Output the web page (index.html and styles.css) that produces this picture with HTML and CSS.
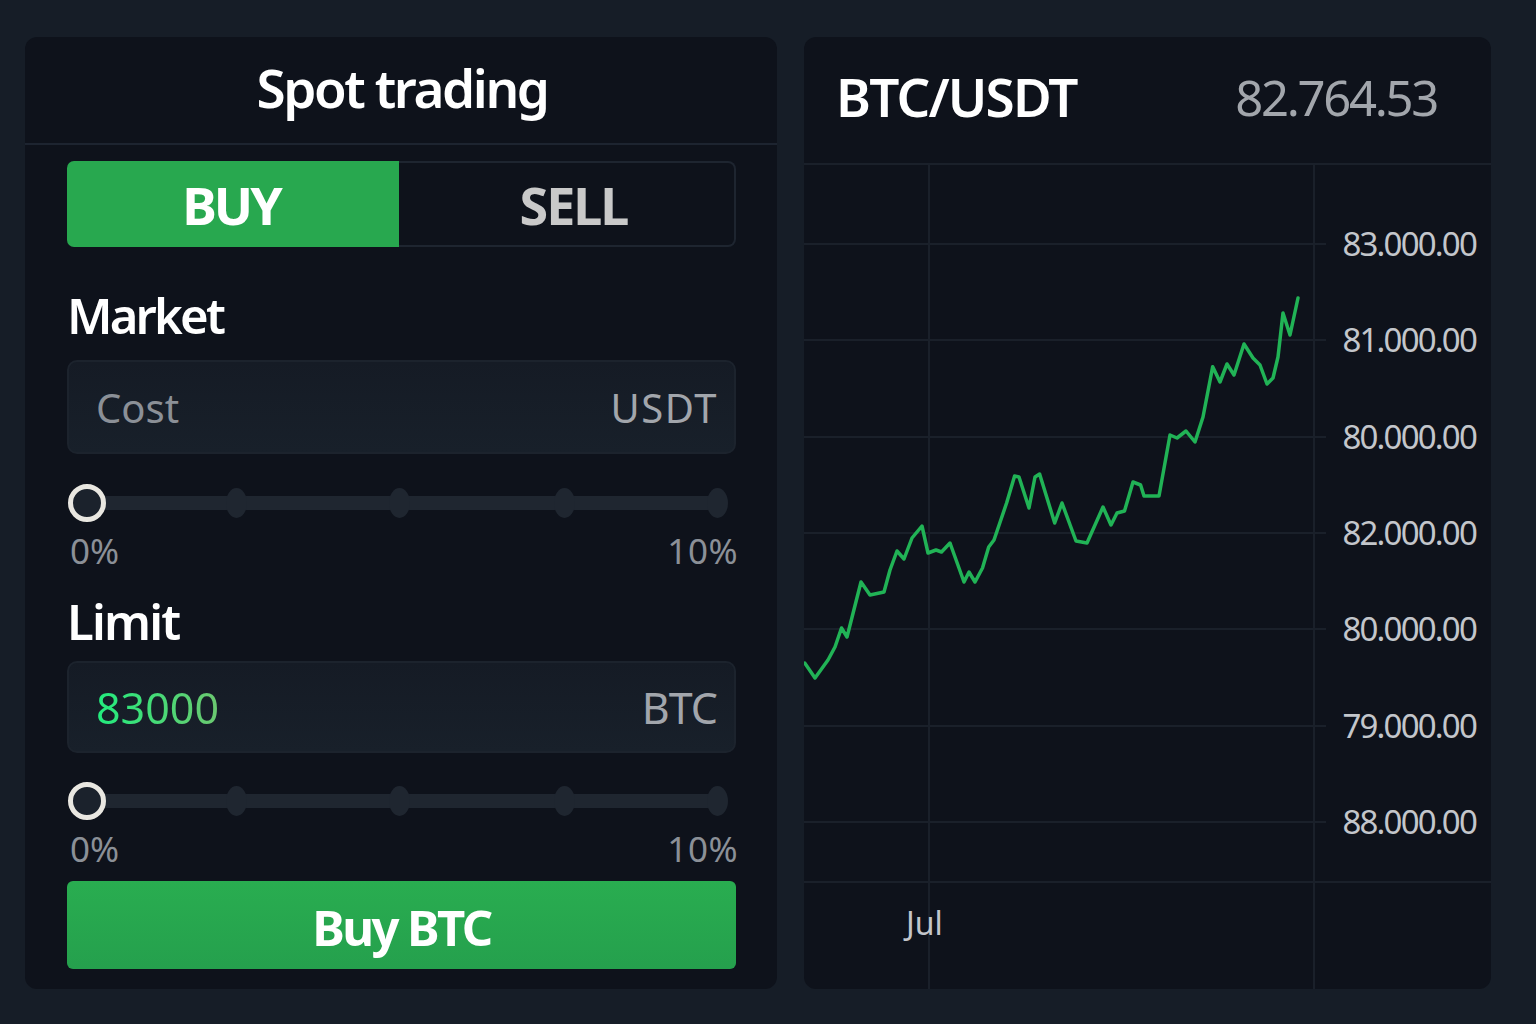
FILE: index.html
```html
<!DOCTYPE html>
<html lang="en">
<head>
<meta charset="utf-8">
<title>Spot trading</title>
<link rel="stylesheet" href="styles.css">
</head>
<body>
<div class="page">
  <section class="card trade">
    <header class="trade-head"><h1>Spot trading</h1></header>
    <div class="trade-body">
      <div class="toggle">
        <div class="tab tab-buy">BUY</div>
        <div class="tab tab-sell">SELL</div>
      </div>

      <h2 class="label label-market">Market</h2>
      <div class="field">
        <span class="field-ph">Cost</span>
        <span class="field-unit">USDT</span>
      </div>
      <div class="slider">
        <span class="knob"></span><span class="dot"></span><span class="dot"></span><span class="dot"></span><span class="dot"></span>
      </div>
      <div class="pct"><span>0%</span><span>10%</span></div>

      <h2 class="label label-limit">Limit</h2>
      <div class="field field-limit">
        <span class="field-val">83000</span>
        <span class="field-unit">BTC</span>
      </div>
      <div class="slider slider-2">
        <span class="knob"></span><span class="dot"></span><span class="dot"></span><span class="dot"></span><span class="dot"></span>
      </div>
      <div class="pct"><span>0%</span><span>10%</span></div>

      <button class="buy-btn">Buy BTC</button>
    </div>
  </section>

  <section class="card chart">
    <header class="chart-head">
      <span class="pair">BTC/USDT</span>
      <span class="price">82.764.53</span>
    </header>
    <svg class="chart-svg" viewBox="804 163 687 826" width="687" height="826">
      <g class="grid">
        <line x1="804" y1="164" x2="1491" y2="164"/>
        <line x1="804" y1="244" x2="1326" y2="244"/>
        <line x1="804" y1="340" x2="1326" y2="340"/>
        <line x1="804" y1="437" x2="1326" y2="437"/>
        <line x1="804" y1="533" x2="1326" y2="533"/>
        <line x1="804" y1="629" x2="1326" y2="629"/>
        <line x1="804" y1="726" x2="1326" y2="726"/>
        <line x1="804" y1="822" x2="1326" y2="822"/>
        <line x1="804" y1="882" x2="1491" y2="882"/>
        <line x1="929" y1="163" x2="929" y2="989"/>
        <line x1="1314" y1="163" x2="1314" y2="989"/>
      </g>
      <g class="axis">
        <text x="1476" y="256" text-anchor="end">83.000.00</text>
        <text x="1476" y="352" text-anchor="end">81.000.00</text>
        <text x="1476" y="449" text-anchor="end">80.000.00</text>
        <text x="1476" y="545" text-anchor="end">82.000.00</text>
        <text x="1476" y="641" text-anchor="end">80.000.00</text>
        <text x="1476" y="738" text-anchor="end">79.000.00</text>
        <text x="1476" y="834" text-anchor="end">88.000.00</text>
        <text x="906" y="935" class="month">Jul</text>
      </g>
      <polyline class="line" points="804.7,663 815,678 828,660 835,647 841.5,628 847,637 861,582 870,595 884,592 890,570 897,551 904,559 912,538 922,526 928,553 936,550 941.5,552 950,543 964,582 969,572 975,582 982.5,568 988.7,547 994,540 1006.6,503 1014.6,476 1019,477 1029,508 1035,477 1039.6,474 1054.7,523 1062,503 1076,541 1087,543 1103,507 1111,525 1117,513 1124.5,511 1133,482 1140.6,485 1144,496 1159,496 1170,435 1177,438 1186,431 1195,442 1203,417 1212.7,366.7 1220,382 1227,364 1234,375 1244,344 1253,358 1260,365 1267,384 1273,378 1278,357 1283,313 1290,335 1298,298"/>
    </svg>
  </section>
</div>
</body>
</html>
```

FILE: styles.css
```css
* { box-sizing: border-box; }
html, body { margin: 0; padding: 0; }
body {
  width: 1536px;
  height: 1024px;
  background: #161d27;
  font-family: "Noto Sans", "DejaVu Sans", sans-serif;
  overflow: hidden;
}
.page {
  display: flex;
  gap: 27px;
  padding: 37px 0 0 25px;
}
.card {
  background: #0e121b;
  border-radius: 12px;
  height: 952px;
  overflow: hidden;
}

/* ---------- trade card ---------- */
.trade { width: 752px; display: flex; flex-direction: column; }
.trade-head {
  height: 108px;
  border-bottom: 2px solid #1d2430;
  display: flex;
  align-items: center;
  justify-content: center;
}
.trade-head h1 {
  margin: 0;
  color: #ffffff;
  font-size: 53px;
  font-weight: 600;
  letter-spacing: -2.4px;
  line-height: 60px;
  margin-top: -5px;
  padding-left: 2px;
}
.trade-body {
  padding: 16px 41px 0 42px;
  display: flex;
  flex-direction: column;
}
.toggle {
  height: 86px;
  display: grid;
  grid-template-columns: 332px 1fr;
}
.tab {
  display: flex;
  align-items: center;
  justify-content: center;
  font-size: 52px;
  font-weight: 700;
  letter-spacing: -3px;
}
.tab-buy {
  background: #28a84f;
  color: #ffffff;
  border-radius: 7px 0 0 7px;
  padding-right: 4px;
}
.tab-sell {
  color: #c9c9c9;
  border: 2px solid #1e2530;
  border-left: none;
  border-radius: 0 8px 8px 0;
  padding-left: 14px;
  letter-spacing: -2px;
}

.label {
  margin: 38px 0 0 0;
  height: 60px;
  line-height: 60px;
  color: #ffffff;
  font-size: 49px;
  font-weight: 600;
  letter-spacing: -2.8px;
}
.label-limit { margin-top: 20px; letter-spacing: -1.8px; }

.field {
  margin-top: 15px;
  height: 94px;
  background: linear-gradient(180deg, #151b25 0%, #18202a 100%);
  border: 2px solid #1c232d;
  border-radius: 10px;
  display: flex;
  align-items: center;
  justify-content: space-between;
  padding: 0 17px 0 27px;
}
.field-limit { margin-top: 10px; height: 92px; }
.field-ph { color: #8b9097; font-size: 40px; }
.field-unit { color: #a2a6ac; font-size: 40px; letter-spacing: 1.5px; margin-right: -1px; }
.field-limit .field-unit { font-size: 43px; letter-spacing: -1px; margin-right: 0; }
.field-val {
  font-size: 43px;
  color: #36d878;
  background: linear-gradient(90deg, #22ec7e 0%, #6cc870 100%);
  -webkit-background-clip: text;
  background-clip: text;
  -webkit-text-fill-color: transparent;
}

.slider {
  margin-top: 30px;
  height: 38px;
  position: relative;
  display: flex;
  align-items: center;
  padding: 0 0 0 1px;
}
.slider::before {
  content: "";
  position: absolute;
  left: 20px;
  right: 18px;
  top: 12px;
  height: 14px;
  border-radius: 7px;
  background: #1f2630;
}
.slider-2 { margin-top: 29px; }
.knob {
  position: relative;
  width: 38px;
  height: 38px;
  border-radius: 50%;
  border: 5px solid #e9e7e1;
  background: #1b222c;
  flex: none;
}
.dot {
  position: relative;
  width: 21px;
  height: 30px;
  border-radius: 50%;
  background: #1f2630;
  flex: none;
}
.knob + .dot { margin-left: 120px; }
.dot + .dot { margin-left: 142px; }
.dot + .dot + .dot { margin-left: 144px; }
.dot + .dot + .dot + .dot { margin-left: 132px; }

.pct {
  margin-top: 9px;
  height: 40px;
  line-height: 40px;
  display: flex;
  justify-content: space-between;
  color: #8b9097;
  font-size: 35px;
  padding: 0 0 0 3px;
  margin-right: -2px;
}
.pct span:last-child { letter-spacing: 0.5px; }

.buy-btn {
  margin-top: 12px;
  height: 88px;
  border: none;
  border-radius: 6px;
  background: linear-gradient(180deg, #29ad50 0%, #25a04d 100%);
  color: #ffffff;
  font-family: "Noto Sans", "DejaVu Sans", sans-serif;
  font-size: 49px;
  font-weight: 700;
  letter-spacing: -2.6px;
  padding: 4px 0 0 0;
}

/* ---------- chart card ---------- */
.chart { width: 687px; display: flex; flex-direction: column; }
.chart-head {
  height: 126px;
  display: flex;
  align-items: center;
  justify-content: space-between;
  padding: 0 54px 8px 32px;
}
.pair {
  color: #ffffff;
  font-size: 53px;
  font-weight: 600;
  letter-spacing: -1.8px;
}
.price {
  color: #a2a6ac;
  font-size: 49px;
  letter-spacing: -2.3px;
  padding-top: 2px;
}
.chart-svg { display: block; }
.grid line { stroke: #1a202a; stroke-width: 2; }
.axis text {
  font-family: "Noto Sans", "DejaVu Sans", sans-serif;
  font-size: 33px;
  letter-spacing: -1.8px;
  fill: #c3c6cb;
}
.axis .month { font-size: 32px; letter-spacing: 0; }
.line {
  fill: none;
  stroke: #21b356;
  stroke-width: 3.5;
  stroke-linejoin: round;
  stroke-linecap: round;
}
```
